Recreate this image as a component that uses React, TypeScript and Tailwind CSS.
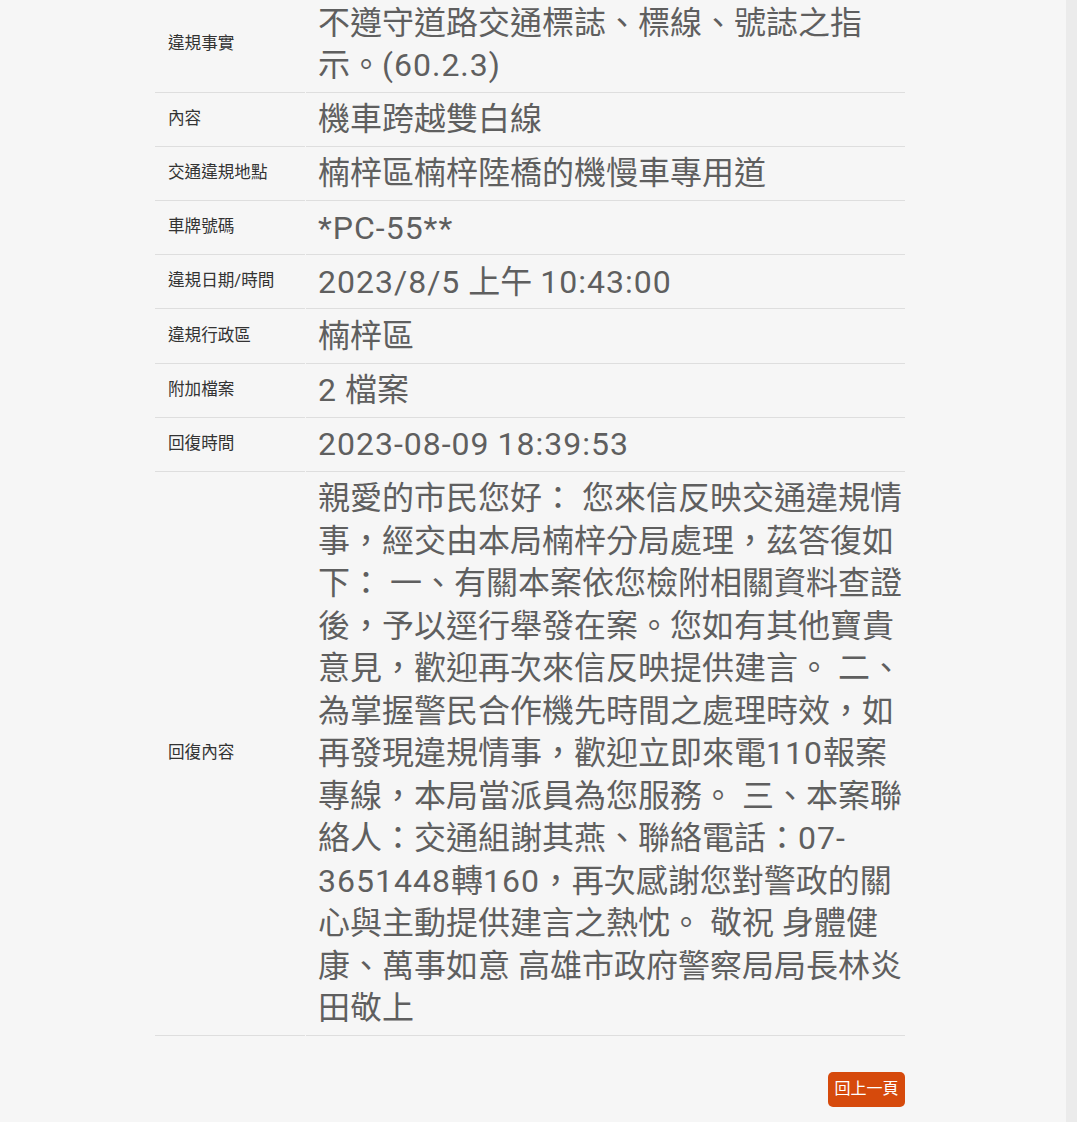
import React from "react";

const rows: { label: string; value: string }[] = [
  { label: "違規事實", value: "不遵守道路交通標誌、標線、號誌之指示。(60.2.3)" },
  { label: "內容", value: "機車跨越雙白線" },
  { label: "交通違規地點", value: "楠梓區楠梓陸橋的機慢車專用道" },
  { label: "車牌號碼", value: "*PC-55**" },
  { label: "違規日期/時間", value: "2023/8/5 上午 10:43:00" },
  { label: "違規行政區", value: "楠梓區" },
  { label: "附加檔案", value: "2 檔案" },
  { label: "回復時間", value: "2023-08-09 18:39:53" },
  {
    label: "回復內容",
    value:
      "親愛的市民您好： 您來信反映交通違規情事，經交由本局楠梓分局處理，茲答復如下： 一、有關本案依您檢附相關資料查證後，予以逕行舉發在案。您如有其他寶貴意見，歡迎再次來信反映提供建言。 二、為掌握警民合作機先時間之處理時效，如再發現違規情事，歡迎立即來電110報案專線，本局當派員為您服務。 三、本案聯絡人：交通組謝其燕、聯絡電話：07-\u200B3651448轉160，再次感謝您對警政的關心與主動提供建言之熱忱。 敬祝 身體健康、萬事如意 高雄市政府警察局局長林炎田敬上",
  },
];

function Value({ text }: { text: string }) {
  const parts = text.split(/([!-~]+)/);
  return (
    <>
      {parts.map((p, i) =>
        i % 2 === 1 ? (
          <span key={i} className="tracking-[1px]">
            {p}
          </span>
        ) : (
          <React.Fragment key={i}>{p}</React.Fragment>
        )
      )}
    </>
  );
}

export default function App() {
  return (
    <div
      className="flex w-[1077px] h-[1122px] overflow-hidden bg-[#f6f6f6]"
      style={{ fontFamily: "Roboto, 'Noto Sans CJK TC', sans-serif" }}
    >
      <div className="flex-1">
        <div className="ml-[155px] w-[750px] -mt-[3.5px] flex flex-col">
          {rows.map((r) => (
            <div key={r.label} className="flex gap-[1px]">
              <div className="w-[150px] shrink-0 flex items-center pl-[13px] border-b border-[#dedede] text-[16.6px] text-[#333333]">
                {r.label}
              </div>
              <div className="flex-1 pl-[12px] py-[5.3px] border-b border-[#dedede] text-[32px] leading-[42.5px] text-[#5f5f5f] break-words">
                <Value text={r.value} />
              </div>
            </div>
          ))}
          <div className="flex justify-end mt-[36px]">
            <button className="w-[77px] h-[35px] rounded-[5px] bg-[#d64a0c] text-white text-[16px] flex items-center justify-center">
              回上一頁
            </button>
          </div>
        </div>
      </div>
      <div className="w-[11px] shrink-0 bg-[#ebebeb]" />
    </div>
  );
}
